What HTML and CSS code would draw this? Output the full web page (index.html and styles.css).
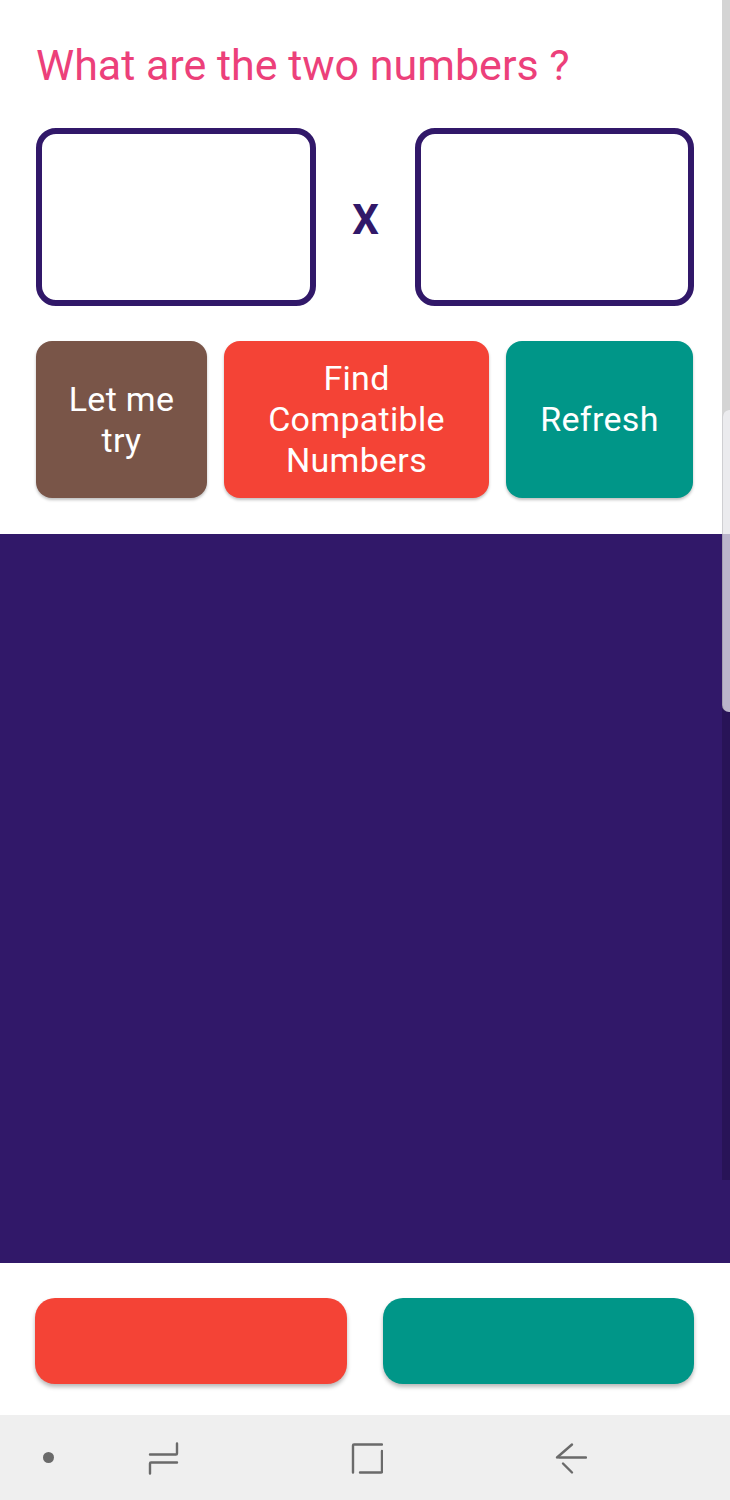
FILE: index.html
```html
<!DOCTYPE html>
<html lang="en">
<head>
<meta charset="utf-8">
<title>Compatible Numbers</title>
<link rel="stylesheet" href="styles.css">
</head>
<body>
<div class="app">
  <section class="top">
    <h1 class="title">What are the two numbers ?</h1>
    <div class="inputs">
      <div class="box"></div>
      <div class="times">X</div>
      <div class="box"></div>
    </div>
    <div class="actions">
      <div class="btn btn-brown">Let me try</div>
      <div class="btn btn-red">Find Compatible Numbers</div>
      <div class="btn btn-teal">Refresh</div>
    </div>
  </section>
  <section class="board"></section>
  <section class="bottom">
    <div class="wide wide-red"></div>
    <div class="wide wide-teal"></div>
  </section>
  <nav class="navbar">
    <span class="nav-dot"></span>
    <svg class="nav-icon recents" width="40" height="40" viewBox="0 0 40 40">
      <path d="M10 16.5 H36 Q37 16.5 37 15.5 V5.5" />
      <path d="M10 35.5 V25.5 Q10 24.5 11 24.5 H37" />
    </svg>
    <svg class="nav-icon home" width="40" height="40" viewBox="0 0 40 40">
      <path d="M10 34.5 V7.5 Q10 6.5 11 6.5 H39" />
      <path d="M39 13 V33.5 Q39 34.5 38 34.5 H17" />
    </svg>
    <svg class="nav-icon back" width="40" height="40" viewBox="0 0 40 40">
      <path d="M12 19.5 H39" />
      <path d="M10 19.5 L25 6.5" />
      <path d="M16 25.5 L25 34.5" />
    </svg>
  </nav>
  <div class="scroll-track"></div>
  <div class="scroll-thumb"></div>
</div>
</body>
</html>
```
FILE: styles.css
```css
* { box-sizing: border-box; }

html, body {
  margin: 0;
  padding: 0;
  background: #ffffff;
}

body {
  font-family: Roboto, "Noto Sans", "Liberation Sans", sans-serif;
}

.app {
  position: relative;
  width: 730px;
  height: 1500px;
  display: flex;
  flex-direction: column;
  overflow: hidden;
}

.top {
  padding: 41px 36px 36px 36px;
  display: flex;
  flex-direction: column;
}

.title {
  margin: 0;
  font-weight: 400;
  font-size: 43px;
  line-height: 49px;
  color: #ec407a;
  white-space: nowrap;
}

.inputs {
  margin-top: 38px;
  height: 178px;
  display: flex;
  align-items: stretch;
}

.box {
  flex: 0 0 280px;
  border: 6px solid #311869;
  border-radius: 20px;
  background: #fff;
}

.box + .times + .box { flex-basis: 279px; }

.times {
  flex: 0 0 99px;
  display: flex;
  align-items: center;
  justify-content: center;
  font-weight: 700;
  font-size: 42px;
  color: #311869;
  padding-top: 4px;
}

.actions {
  margin-top: 35px;
  height: 157px;
  display: flex;
  gap: 17px;
}

.btn {
  display: flex;
  align-items: center;
  justify-content: center;
  text-align: center;
  padding: 0 16px;
  border-radius: 16px;
  color: #fff;
  font-size: 34px;
  letter-spacing: 0.3px;
  line-height: 41px;
  box-shadow: 0 2px 3px rgba(0, 0, 0, 0.25);
}

.btn-brown { flex: 0 0 171px; background: #795548; }
.btn-red { flex: 0 0 265px; background: #f44336; }
.btn-teal { flex: 0 0 187px; background: #009688; }

.board {
  height: 729px;
  background: #311869;
  flex: 0 0 auto;
}

.bottom {
  flex: 0 0 152px;
  padding: 35px 36px 0 35px;
  display: flex;
  gap: 36px;
  background: #fff;
}

.wide {
  height: 86px;
  border-radius: 20px;
  box-shadow: 0 3px 4px rgba(0, 0, 0, 0.28);
}

.wide-red { flex: 0 0 312px; background: #f44336; }
.wide-teal { flex: 0 0 311px; background: #009688; }

.navbar {
  flex: 1 1 auto;
  background: #efefef;
  display: flex;
  align-items: center;
}

.nav-dot {
  width: 11px;
  height: 11px;
  border-radius: 50%;
  background: #6a6a6a;
  margin-left: 43px;
}

.nav-icon {
  fill: none;
  stroke: #6a6a6a;
  stroke-width: 2.4;
  stroke-linecap: round;
}

.recents { margin-left: 86px; }
.home { margin-left: 163px; }
.back { margin-left: 164px; }

.scroll-track {
  position: absolute;
  top: 0;
  right: 0;
  width: 8px;
  height: 1180px;
  background: rgba(0, 0, 0, 0.17);
}

.scroll-thumb {
  position: absolute;
  top: 410px;
  right: 0;
  width: 8px;
  height: 302px;
  border-radius: 7px 0 0 7px;
  background: rgba(244, 244, 248, 0.72);
  border-left: 1px solid rgba(0, 0, 0, 0.12);
}
```
